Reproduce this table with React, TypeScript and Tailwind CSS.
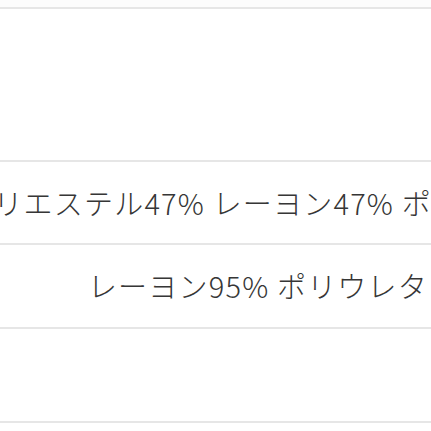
export default function App() {
  const rows = [
    { h: "h-[151px]", text: "" },
    { h: "h-[81px]", text: "ポリエステル47% レーヨン47% ポリウレタン6%" },
    { h: "h-[82px]", text: "レーヨン95% ポリウレタン5%" },
    { h: "h-[92px]", text: "" },
  ];

  return (
    <div
      className="w-[431px] h-[431px] overflow-hidden bg-white"
      style={{ fontFamily: '"Noto Sans CJK JP", "Noto Sans", sans-serif' }}
    >
      <div className="h-[7px] bg-[#fcfcfc]" />
      {rows.map((row, i) => (
        <div key={i} className="border-t-2 border-[#e6e6e6]">
          <div className={`${row.h} w-[590px] flex items-center justify-center`}>
            <span className="whitespace-nowrap text-[29px] font-light text-[#363636] tracking-[1.2px]">
              {row.text}
            </span>
          </div>
        </div>
      ))}
      <div className="border-t-2 border-[#e6e6e6] h-[20px]" />
    </div>
  );
}
